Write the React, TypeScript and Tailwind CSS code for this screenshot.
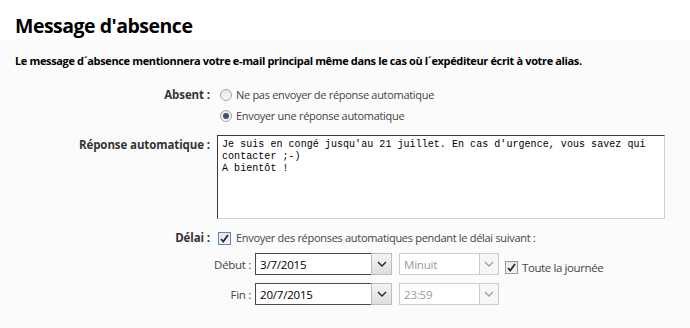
import React from "react";

const Chevron = ({ color }: { color: string }) => (
  <svg width="10" height="6" viewBox="0 0 10 6">
    <polyline points="1,1 5,5 9,1" fill="none" stroke={color} strokeWidth="1.4" />
  </svg>
);

const Check = () => (
  <svg width="9" height="9" viewBox="0 0 9 9">
    <path d="M1 5 L3.3 7.5 L8 1" fill="none" stroke="#2b2b2b" strokeWidth="1.8" />
  </svg>
);

const Radio = ({ checked }: { checked?: boolean }) => (
  <span className="w-[12px] h-[12px] rounded-full border border-[#a5a5a5] bg-gradient-to-b from-[#e8e8e8] to-[#f8f8f8] flex items-center justify-center shrink-0">
    {checked && <span className="w-[6px] h-[6px] rounded-full bg-[#3d4f7a]" />}
  </span>
);

const CheckBox = ({ focus }: { focus?: boolean }) => (
  <span
    className={
      "w-[13px] h-[13px] border flex items-center justify-center shrink-0 bg-gradient-to-b from-[#e6e6e6] to-[#f6f6f6] " +
      (focus ? "border-[#5b86c8]" : "border-[#9a9a9a]")
    }
  >
    <Check />
  </span>
);

const DateInput = ({ value }: { value: string }) => (
  <div className="flex h-[22px]">
    <div className="w-[116px] h-full border-t border-l border-b border-[#4a4a4a] bg-white text-[11.5px] text-black pl-[4px] flex items-center tracking-[-0.2px]">
      {value}
    </div>
    <div className="w-[21px] h-full border border-[#bdbdbd] bg-gradient-to-b from-[#f4f4f4] to-[#dedede] flex items-center justify-center">
      <Chevron color="#222" />
    </div>
  </div>
);

const TimeSelect = ({ value }: { value: string }) => (
  <div className="flex h-[22px] ml-[7px]">
    <div className="w-[80px] h-full border-t border-l border-b border-[#cccccc] bg-white text-[11.5px] text-[#9a9a9a] pl-[4px] flex items-center tracking-[-0.2px]">
      {value}
    </div>
    <div className="w-[20px] h-full border border-[#cccccc] bg-[#f6f6f6] flex items-center justify-center">
      <Chevron color="#a0a0a0" />
    </div>
  </div>
);

export default function App() {
  return (
    <div className="w-[690px] h-[328px] bg-[#fbfbfb] overflow-hidden text-[#333] font-['Open_Sans',sans-serif]">
      <div className="bg-white h-[40px] pl-[15px] pt-[12px]">
        <h1 className="text-[19.5px] leading-[28px] font-bold text-black tracking-[-0.5px]">Message d'absence</h1>
      </div>
      <p className="pl-[15px] mt-[13px] text-[11px] leading-[16px] font-bold text-black tracking-[-0.36px]">
        Le message d´absence mentionnera votre e-mail principal même dans le cas où l´expéditeur écrit à votre alias.
      </p>

      <div className="mt-[16px] grid grid-cols-[210px_1fr] gap-x-[7px] text-[11px] tracking-[-0.3px]">
        <div className="text-right font-bold text-[11.5px] tracking-[-0.1px] text-[#333] leading-[20px]">Absent :</div>
        <div className="flex flex-col gap-[1px]">
          <label className="flex items-center gap-[4px] h-[20px] pl-[3px] text-[#444]">
            <Radio /> Ne pas envoyer de réponse automatique
          </label>
          <label className="flex items-center gap-[4px] h-[20px] pl-[3px] text-[#444]">
            <Radio checked /> Envoyer une réponse automatique
          </label>
        </div>

        <div className="text-right font-bold text-[11.5px] tracking-[-0.1px] text-[#333] leading-[20px] mt-[9px]">Réponse automatique :</div>
        <div className="mt-[9px]">
          <div className="w-[448px] h-[84px] border border-t-[#3a3a3a] border-l-[#3a3a3a] border-r-[#d0d0d0] border-b-[#d0d0d0] bg-white px-[4px] pt-[3px] font-['Liberation_Mono',monospace] text-[10px] leading-[12px] tracking-[0.05px] text-black whitespace-pre">
            {"Je suis en congé jusqu'au 21 juillet. En cas d'urgence, vous savez qui\ncontacter ;-)\nA bientôt !"}
          </div>
        </div>

        <div className="text-right font-bold text-[11.5px] tracking-[-0.1px] text-[#333] leading-[20px] mt-[9px]">Délai :</div>
        <div className="mt-[9px]">
          <label className="flex items-center gap-[5px] h-[20px] pl-[1px] text-[#444]">
            <CheckBox focus /> Envoyer des réponses automatiques pendant le délai suivant :
          </label>
          <div className="mt-[4px] flex flex-col gap-[7px]">
            <div className="flex items-center -ml-[19px]">
              <div className="w-[57px] pr-[4px] text-right text-[11.5px] text-[#444] whitespace-nowrap">Début :</div>
              <DateInput value="3/7/2015" />
              <TimeSelect value="Minuit" />
              <label className="flex items-center gap-[4px] ml-[6px] text-[11.5px] tracking-[-0.4px] text-[#444] mt-[7px]">
                <CheckBox /> Toute la journée
              </label>
            </div>
            <div className="flex items-center -ml-[19px]">
              <div className="w-[57px] pr-[4px] text-right text-[11.5px] text-[#444] whitespace-nowrap">Fin :</div>
              <DateInput value="20/7/2015" />
              <TimeSelect value="23:59" />
            </div>
          </div>
        </div>
      </div>
    </div>
  );
}
